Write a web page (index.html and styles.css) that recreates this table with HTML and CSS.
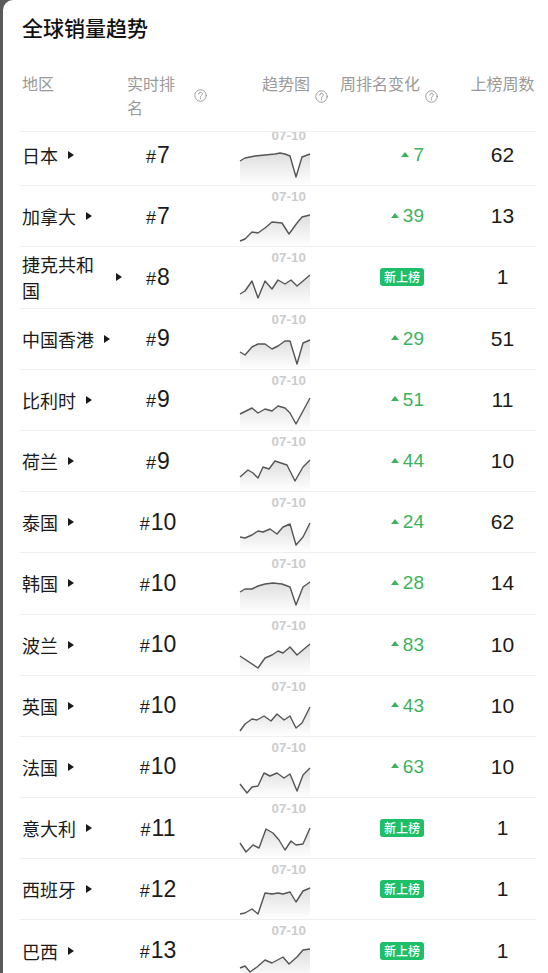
FILE: index.html
```html
<!DOCTYPE html>
<html lang="zh-CN">
<head>
<meta charset="utf-8">
<title>全球销量趋势</title>
<link rel="stylesheet" href="styles.css">
</head>
<body>
<svg class="defs" width="0" height="0" aria-hidden="true">
  <defs>
    <linearGradient id="sg" x1="0" y1="0" x2="0" y2="1">
      <stop offset="0" stop-color="#000" stop-opacity="0.13"/>
      <stop offset="1" stop-color="#000" stop-opacity="0"/>
    </linearGradient>
  </defs>
</svg>
<div class="card">
  <div class="head">
    <h1 class="title">全球销量趋势</h1>
    <div class="cols">
      <div class="hc hc-region"><span class="ht">地区</span></div>
      <div class="hc hc-rank"><span class="ht ht-wrap">实时排名</span><svg class="qi" viewBox="0 0 12 12"><circle cx="6" cy="6" r="5.3"/><path d="M4.4 4.7a1.6 1.6 0 1 1 2.3 1.4c-.5.25-.7.55-.7 1.1v.4"/><circle class="dot" cx="6" cy="8.9" r=".55"/></svg></div>
      <div class="hc hc-trend"><span class="ht">趋势图</span><svg class="qi" viewBox="0 0 12 12"><circle cx="6" cy="6" r="5.3"/><path d="M4.4 4.7a1.6 1.6 0 1 1 2.3 1.4c-.5.25-.7.55-.7 1.1v.4"/><circle class="dot" cx="6" cy="8.9" r=".55"/></svg></div>
      <div class="hc hc-change"><span class="ht">周排名变化</span><svg class="qi" viewBox="0 0 12 12"><circle cx="6" cy="6" r="5.3"/><path d="M4.4 4.7a1.6 1.6 0 1 1 2.3 1.4c-.5.25-.7.55-.7 1.1v.4"/><circle class="dot" cx="6" cy="8.9" r=".55"/></svg></div>
      <div class="hc hc-weeks"><span class="ht">上榜周数</span></div>
    </div>
  </div>

  <div class="rows">
    <div class="row">
      <div class="c-region"><span class="name">日本</span><i class="caret"></i></div>
      <div class="c-rank"><span class="hash">#</span>7</div>
      <div class="c-trend"><div class="date">07-10</div><svg class="spark" viewBox="0 0 70 42"><path class="area" d="M0,18 L5,15 L15,13 L25,12 L35,11 L40,10 L45,11 L50,13 L56,34 L62,14 L70,11 L70,42 L0,42 Z"/><path class="ln" d="M0,18 L5,15 L15,13 L25,12 L35,11 L40,10 L45,11 L50,13 L56,34 L62,14 L70,11"/></svg></div>
      <div class="c-change"><i class="up"></i>7</div>
      <div class="c-weeks">62</div>
    </div>
    <div class="row">
      <div class="c-region"><span class="name">加拿大</span><i class="caret"></i></div>
      <div class="c-rank"><span class="hash">#</span>7</div>
      <div class="c-trend"><div class="date">07-10</div><svg class="spark" viewBox="0 0 70 42"><path class="area" d="M0,37 L5,35 L12,28 L18,29 L25,24 L32,18 L42,19 L49,30 L57,19 L62,13 L70,11 L70,42 L0,42 Z"/><path class="ln" d="M0,37 L5,35 L12,28 L18,29 L25,24 L32,18 L42,19 L49,30 L57,19 L62,13 L70,11"/></svg></div>
      <div class="c-change"><i class="up"></i>39</div>
      <div class="c-weeks">13</div>
    </div>
    <div class="row">
      <div class="c-region"><span class="name">捷克共和国</span><i class="caret"></i></div>
      <div class="c-rank"><span class="hash">#</span>8</div>
      <div class="c-trend"><div class="date">07-10</div><svg class="spark" viewBox="0 0 70 42"><path class="area" d="M0,29 L5,26 L12,16 L18,33 L25,16 L32,24 L38,15 L45,19 L51,15 L57,21 L63,16 L70,10 L70,42 L0,42 Z"/><path class="ln" d="M0,29 L5,26 L12,16 L18,33 L25,16 L32,24 L38,15 L45,19 L51,15 L57,21 L63,16 L70,10"/></svg></div>
      <div class="c-change"><span class="badge">新上榜</span></div>
      <div class="c-weeks">1</div>
    </div>
    <div class="row">
      <div class="c-region"><span class="name">中国香港</span><i class="caret"></i></div>
      <div class="c-rank"><span class="hash">#</span>9</div>
      <div class="c-trend"><div class="date">07-10</div><svg class="spark" viewBox="0 0 70 42"><path class="area" d="M0,25 L5,28 L12,20 L18,17 L25,17 L32,22 L38,19 L45,14 L50,14 L57,37 L63,16 L70,13 L70,42 L0,42 Z"/><path class="ln" d="M0,25 L5,28 L12,20 L18,17 L25,17 L32,22 L38,19 L45,14 L50,14 L57,37 L63,16 L70,13"/></svg></div>
      <div class="c-change"><i class="up"></i>29</div>
      <div class="c-weeks">51</div>
    </div>
    <div class="row">
      <div class="c-region"><span class="name">比利时</span><i class="caret"></i></div>
      <div class="c-rank"><span class="hash">#</span>9</div>
      <div class="c-trend"><div class="date">07-10</div><svg class="spark" viewBox="0 0 70 42"><path class="area" d="M0,26 L12,20 L18,25 L25,21 L32,23 L38,18 L45,20 L50,25 L56,36 L63,23 L70,10 L70,42 L0,42 Z"/><path class="ln" d="M0,26 L12,20 L18,25 L25,21 L32,23 L38,18 L45,20 L50,25 L56,36 L63,23 L70,10"/></svg></div>
      <div class="c-change"><i class="up"></i>51</div>
      <div class="c-weeks">11</div>
    </div>
    <div class="row">
      <div class="c-region"><span class="name">荷兰</span><i class="caret"></i></div>
      <div class="c-rank"><span class="hash">#</span>9</div>
      <div class="c-trend"><div class="date">07-10</div><svg class="spark" viewBox="0 0 70 42"><path class="area" d="M0,28 L8,21 L13,24 L18,29 L23,18 L29,20 L35,12 L41,14 L47,16 L55,32 L63,18 L70,11 L70,42 L0,42 Z"/><path class="ln" d="M0,28 L8,21 L13,24 L18,29 L23,18 L29,20 L35,12 L41,14 L47,16 L55,32 L63,18 L70,11"/></svg></div>
      <div class="c-change"><i class="up"></i>44</div>
      <div class="c-weeks">10</div>
    </div>
    <div class="row">
      <div class="c-region"><span class="name">泰国</span><i class="caret"></i></div>
      <div class="c-rank"><span class="hash">#</span>10</div>
      <div class="c-trend"><div class="date">07-10</div><svg class="spark" viewBox="0 0 70 42"><path class="area" d="M0,27 L5,28 L12,25 L18,21 L23,22 L30,19 L37,24 L43,17 L50,14 L56,35 L63,27 L70,13 L70,42 L0,42 Z"/><path class="ln" d="M0,27 L5,28 L12,25 L18,21 L23,22 L30,19 L37,24 L43,17 L50,14 L56,35 L63,27 L70,13"/></svg></div>
      <div class="c-change"><i class="up"></i>24</div>
      <div class="c-weeks">62</div>
    </div>
    <div class="row">
      <div class="c-region"><span class="name">韩国</span><i class="caret"></i></div>
      <div class="c-rank"><span class="hash">#</span>10</div>
      <div class="c-trend"><div class="date">07-10</div><svg class="spark" viewBox="0 0 70 42"><path class="area" d="M0,21 L5,18 L12,18 L18,15 L25,13 L33,12 L42,13 L50,16 L56,34 L63,16 L70,11 L70,42 L0,42 Z"/><path class="ln" d="M0,21 L5,18 L12,18 L18,15 L25,13 L33,12 L42,13 L50,16 L56,34 L63,16 L70,11"/></svg></div>
      <div class="c-change"><i class="up"></i>28</div>
      <div class="c-weeks">14</div>
    </div>
    <div class="row">
      <div class="c-region"><span class="name">波兰</span><i class="caret"></i></div>
      <div class="c-rank"><span class="hash">#</span>10</div>
      <div class="c-trend"><div class="date">07-10</div><svg class="spark" viewBox="0 0 70 42"><path class="area" d="M0,23 L18,35 L25,25 L32,22 L38,18 L43,20 L50,14 L57,22 L70,11 L70,42 L0,42 Z"/><path class="ln" d="M0,23 L18,35 L25,25 L32,22 L38,18 L43,20 L50,14 L57,22 L70,11"/></svg></div>
      <div class="c-change"><i class="up"></i>83</div>
      <div class="c-weeks">10</div>
    </div>
    <div class="row">
      <div class="c-region"><span class="name">英国</span><i class="caret"></i></div>
      <div class="c-rank"><span class="hash">#</span>10</div>
      <div class="c-trend"><div class="date">07-10</div><svg class="spark" viewBox="0 0 70 42"><path class="area" d="M0,37 L5,30 L12,25 L17,26 L24,22 L31,27 L37,20 L44,26 L50,22 L56,34 L62,29 L70,13 L70,42 L0,42 Z"/><path class="ln" d="M0,37 L5,30 L12,25 L17,26 L24,22 L31,27 L37,20 L44,26 L50,22 L56,34 L62,29 L70,13"/></svg></div>
      <div class="c-change"><i class="up"></i>43</div>
      <div class="c-weeks">10</div>
    </div>
    <div class="row">
      <div class="c-region"><span class="name">法国</span><i class="caret"></i></div>
      <div class="c-rank"><span class="hash">#</span>10</div>
      <div class="c-trend"><div class="date">07-10</div><svg class="spark" viewBox="0 0 70 42"><path class="area" d="M0,29 L7,38 L12,32 L18,31 L24,18 L30,21 L37,18 L44,23 L50,19 L57,36 L63,20 L70,13 L70,42 L0,42 Z"/><path class="ln" d="M0,29 L7,38 L12,32 L18,31 L24,18 L30,21 L37,18 L44,23 L50,19 L57,36 L63,20 L70,13"/></svg></div>
      <div class="c-change"><i class="up"></i>63</div>
      <div class="c-weeks">10</div>
    </div>
    <div class="row">
      <div class="c-region"><span class="name">意大利</span><i class="caret"></i></div>
      <div class="c-rank"><span class="hash">#</span>11</div>
      <div class="c-trend"><div class="date">07-10</div><svg class="spark" viewBox="0 0 70 42"><path class="area" d="M0,27 L6,36 L13,29 L19,32 L26,13 L33,17 L39,24 L45,34 L51,25 L56,29 L63,28 L70,12 L70,42 L0,42 Z"/><path class="ln" d="M0,27 L6,36 L13,29 L19,32 L26,13 L33,17 L39,24 L45,34 L51,25 L56,29 L63,28 L70,12"/></svg></div>
      <div class="c-change"><span class="badge">新上榜</span></div>
      <div class="c-weeks">1</div>
    </div>
    <div class="row">
      <div class="c-region"><span class="name">西班牙</span><i class="caret"></i></div>
      <div class="c-rank"><span class="hash">#</span>12</div>
      <div class="c-trend"><div class="date">07-10</div><svg class="spark" viewBox="0 0 70 42"><path class="area" d="M0,37 L5,36 L12,32 L18,37 L25,16 L32,17 L38,16 L43,17 L50,15 L56,25 L63,14 L70,11 L70,42 L0,42 Z"/><path class="ln" d="M0,37 L5,36 L12,32 L18,37 L25,16 L32,17 L38,16 L43,17 L50,15 L56,25 L63,14 L70,11"/></svg></div>
      <div class="c-change"><span class="badge">新上榜</span></div>
      <div class="c-weeks">1</div>
    </div>
    <div class="row">
      <div class="c-region"><span class="name">巴西</span><i class="caret"></i></div>
      <div class="c-rank"><span class="hash">#</span>13</div>
      <div class="c-trend"><div class="date">07-10</div><svg class="spark" viewBox="0 0 70 42"><path class="area" d="M0,30 L5,28 L10,34 L17,29 L25,22 L32,25 L43,19 L49,26 L57,19 L63,12 L70,11 L70,42 L0,42 Z"/><path class="ln" d="M0,30 L5,28 L10,34 L17,29 L25,22 L32,25 L43,19 L49,26 L57,19 L63,12 L70,11"/></svg></div>
      <div class="c-change"><span class="badge">新上榜</span></div>
      <div class="c-weeks">1</div>
    </div>
  </div>
</div>
</body>
</html>
```

FILE: styles.css
```css
* { box-sizing: border-box; }

html, body {
  margin: 0;
  padding: 0;
  height: 100%;
}

body {
  background: #5a5a5a;
  font-family: "Liberation Sans", "Noto Sans CJK SC", sans-serif;
  color: #1a1a1a;
  overflow: hidden;
}

.defs {
  position: absolute;
  width: 0;
  height: 0;
}

.card {
  margin-left: 3px;
  height: 100%;
  background: #fff;
  border-top-left-radius: 10px;
  padding: 0 12px 0 17px;
  overflow: hidden;
}

.head {
  position: relative;
  z-index: 1;
  background: #fff;
  border-bottom: 1px solid #efefef;
}

.title {
  margin: 0;
  padding-left: 2px;
  height: 54px;
  line-height: 54px;
  font-family: "Noto Sans CJK SC", sans-serif;
  font-size: 21px;
  font-weight: 500;
  color: #111;
}

.cols {
  display: grid;
  grid-template-columns: 102px 92px 122px 133px 67px;
  padding: 17px 0 12px;
  color: #9a9a9a;
  font-family: "Noto Sans CJK SC", sans-serif;
  font-size: 16px;
  line-height: 24px;
}

.hc {
  display: flex;
  align-items: center;
}

.ht {
  align-self: flex-start;
}

.hc-region { padding-left: 2px; }

.hc-rank { padding-left: 5px; padding-right: 7px; }
.hc-rank .ht-wrap { max-width: 50px; }
.hc-rank .qi { margin-left: auto; }

.hc-trend { justify-content: flex-end; padding-right: 8px; }
.hc-trend .qi { margin-left: 5px; margin-top: 3px; }

.hc-change { padding-left: 4px; }
.hc-change .qi { margin-left: 5px; margin-top: 3px; }

.hc-weeks { justify-content: center; }

.qi {
  width: 13px;
  height: 13px;
  flex: none;
  fill: none;
  stroke: #9a9a9a;
  stroke-width: 0.9;
  stroke-linecap: round;
}

.qi .dot {
  fill: #9a9a9a;
  stroke: none;
}

.rows {
  margin-top: -7px;
}

.row {
  display: grid;
  grid-template-columns: 102px 92px 122px 133px 67px;
  align-items: center;
  height: 61.2px;
  border-bottom: 1px solid #efefef;
}

.c-region {
  display: flex;
  align-items: center;
  padding-left: 2px;
  font-family: "Noto Sans CJK SC", sans-serif;
  font-size: 18px;
  line-height: 26px;
  color: #1a1a1a;
}

.name {
  max-width: 87px;
}

.caret {
  flex: none;
  width: 0;
  height: 0;
  margin-left: 10px;
  border-left: 6px solid #1a1a1a;
  border-top: 4.5px solid transparent;
  border-bottom: 4.5px solid transparent;
}

.c-rank {
  padding-right: 20px;
  text-align: center;
  font-size: 23px;
  color: #1a1a1a;
}

.hash {
  font-size: 18px;
  margin-right: 1px;
}

.c-trend {
  align-self: start;
  padding: 4px 0 0 26px;
}

.date {
  width: 70px;
  padding-right: 4px;
  text-align: right;
  font-size: 13.5px;
  font-weight: 700;
  line-height: 14px;
  color: #cccccc;
}

.spark {
  display: block;
  width: 70px;
  height: 42px;
  overflow: visible;
}

.spark .area {
  fill: url(#sg);
}

.spark .ln {
  fill: none;
  stroke: #555;
  stroke-width: 1.4;
  stroke-linejoin: round;
}

.c-change {
  display: flex;
  align-items: center;
  justify-content: flex-end;
  padding-right: 45px;
  font-size: 19px;
  color: #3bb35c;
}

.up {
  width: 0;
  height: 0;
  margin-right: 4px;
  margin-bottom: 2px;
  border-bottom: 5px solid #3bb35c;
  border-left: 4px solid transparent;
  border-right: 4px solid transparent;
}

.badge {
  display: inline-block;
  height: 18px;
  padding: 0 4px;
  border-radius: 3px;
  background: #1dbf69;
  color: #fff;
  font-family: "Noto Sans CJK SC", sans-serif;
  font-size: 12px;
  line-height: 18px;
  font-weight: 500;
}

.c-weeks {
  text-align: center;
  font-size: 21px;
  color: #1a1a1a;
}
```
